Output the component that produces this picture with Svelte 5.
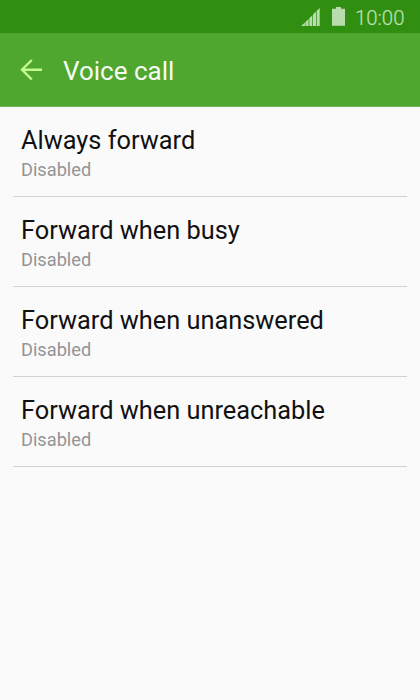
<script>
  const options = ['Always forward', 'Forward when busy', 'Forward when unanswered', 'Forward when unreachable'];
</script>

<main>
  <div class="status">
    <svg class="signal" width="19" height="19" viewBox="0 0 19 19">
      <path d="M0 18l4-3.5V18zM4.5 14l3-3v7h-3zM8.3 10.2l3-3V18h-3zM12 6.5l3-3V18h-3zM15.7 2.8L18.7 0v18h-3z" />
    </svg>
    <svg class="battery" width="13" height="19" viewBox="0 0 13 19">
      <path d="M4 0h5v1.7h4v17H0v-17h4z" />
    </svg>
    <span class="time">10:00</span>
  </div>
  <header>
    <svg width="22" height="22" viewBox="0 0 22 22">
      <path d="M11.8 1 2 10.7l9.8 9.8M2 10.7h20" />
    </svg>
    <h1>Voice call</h1>
  </header>
  <ul>
    {#each options as title}
      <li>
        <span class="title">{title}</span>
        <span class="sub">Disabled</span>
      </li>
    {/each}
  </ul>
</main>

<style>
  main { width: 420px; height: 700px; background: #fafafa; font-family: Roboto, sans-serif; overflow: hidden; }
  .status { height: 33px; background: #308e10; display: flex; justify-content: flex-end; align-items: flex-start; padding: 0 15.5px 0 0; box-sizing: border-box; color: #bfe0b3; }
  .status svg { fill: #b8dcae; }
  .signal { margin-top: 8px; }
  .battery { margin: 7px 0 0 12px; }
  .time { margin-left: 10px; font-size: 20.4px; line-height: 36px; font-weight: 300; -webkit-text-stroke: 0.2px; }
  header { height: 74px; background: #50a730; display: flex; align-items: center; padding-left: 20px; box-sizing: border-box; border-bottom: 1px solid #70b458; }
  header svg { fill: none; stroke: #c3fc8c; stroke-width: 2.4; }
  h1 { margin: 3px 0 0 21px; font-size: 26px; line-height: 30px; font-weight: 400; color: #f5fbf2; }
  ul { list-style: none; margin: 0; padding: 0 13px; }
  li { height: 90px; box-sizing: border-box; border-bottom: 1px solid #d2d2d2; padding: 18px 8px 0; display: flex; flex-direction: column; }
  .title { font-size: 25.35px; line-height: 30px; color: #111; }
  .sub { font-size: 18.2px; line-height: 22px; color: #949494; margin-top: 4px; }
</style>
